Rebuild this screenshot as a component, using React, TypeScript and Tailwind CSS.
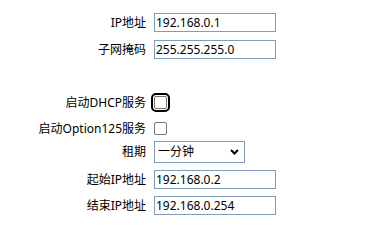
import React from "react";

const font = { fontFamily: '"Noto Sans", "Noto Sans CJK SC", sans-serif' };

function Label({ children }: { children: React.ReactNode }) {
  return (
    <div className="w-[146px] shrink-0 text-right pr-0 whitespace-nowrap leading-none">
      {children}
    </div>
  );
}

function TextInput({ value }: { value: string }) {
  return (
    <div className="ml-[8px] w-[122px] h-[19px] border border-[#7f9db9] bg-white flex items-center pl-[1px] leading-none text-black">
      {value}
    </div>
  );
}

function Checkbox({ focused }: { focused?: boolean }) {
  return (
    <div
      className={
        "ml-[8px] w-[13px] h-[13px] border border-[#767676] rounded-[2px] bg-white " +
        (focused ? "outline-2 outline-black outline-offset-1" : "")
      }
    />
  );
}

export default function App() {
  return (
    <div className="w-[387px] h-[222px] bg-white text-[12px] text-black overflow-hidden flex flex-col" style={font}>
      <div className="mt-[13px] h-[19px] flex items-center">
        <Label>IP地址</Label>
        <TextInput value="192.168.0.1" />
      </div>
      <div className="mt-[8px] h-[19px] flex items-center">
        <Label>子网掩码</Label>
        <TextInput value="255.255.255.0" />
      </div>
      <div className="mt-[37px] h-[13px] flex items-center">
        <Label>启动DHCP服务</Label>
        <Checkbox focused />
      </div>
      <div className="mt-[13px] h-[13px] flex items-center">
        <Label>启动Option125服务</Label>
        <Checkbox />
      </div>
      <div className="mt-[6px] h-[22px] flex items-center">
        <Label>租期</Label>
        <div className="ml-[8px] w-[91px] h-[22px] border border-[#7f9db9] bg-white flex items-center justify-between pl-[3px] pr-[4px] leading-none">
          <span>一分钟</span>
          <svg width="9" height="6" viewBox="0 0 9 6" className="mr-[1px]">
            <path d="M1 1 L4.5 4.5 L8 1" fill="none" stroke="#000" strokeWidth="2" />
          </svg>
        </div>
      </div>
      <div className="mt-[7px] h-[19px] flex items-center">
        <Label>起始IP地址</Label>
        <TextInput value="192.168.0.2" />
      </div>
      <div className="mt-[7px] h-[19px] flex items-center">
        <Label>结束IP地址</Label>
        <TextInput value="192.168.0.254" />
      </div>
    </div>
  );
}
